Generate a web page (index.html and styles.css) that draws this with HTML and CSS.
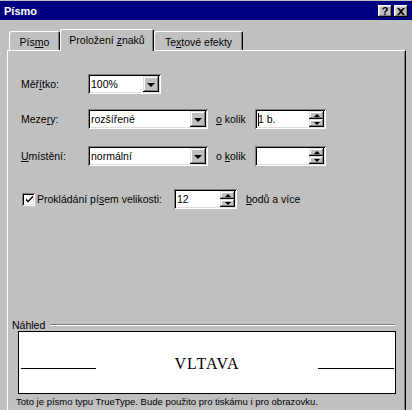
FILE: index.html
```html
<!DOCTYPE html>
<html lang="cs">
<head>
<meta charset="utf-8">
<title>Písmo</title>
<link rel="stylesheet" href="styles.css">
</head>
<body>
<div class="window">
  <div class="titlebar">
    <span class="title">Písmo</span>
    <div class="caption-buttons">
      <span class="cbtn help">?</span>
      <span class="cbtn close"><svg width="8" height="7" viewBox="0 0 8 7"><path d="M0 0h2l2 2 2-2h2L5 3.5 8 7H6L4 5 2 7H0l3-3.5z" fill="#000"/></svg></span>
    </div>
  </div>

  <div class="tabs">
    <div class="tab t1"><span>Pís<u>m</u>o</span></div>
    <div class="tab t2 active"><span>Proložení <u>z</u>naků</span></div>
    <div class="tab t3"><span>Te<u>x</u>tové efekty</span></div>
  </div>

  <div class="panel">
    <div class="row r1">
      <span class="lbl">Měř<u>í</u>tko:</span>
      <div class="field combo w-small"><span class="val">100%</span><span class="drop"><i class="arrow"></i></span></div>
    </div>

    <div class="row r2">
      <span class="lbl">Meze<u>r</u>y:</span>
      <div class="field combo w-wide"><span class="val">rozšířené</span><span class="drop"><i class="arrow"></i></span></div>
      <span class="kolik"><u>o</u> kolik</span>
      <div class="field spin w-spin"><span class="val"><i class="caret"></i>1 b.</span><span class="spinbtns"><b class="sb"><i class="up"></i></b><b class="sb"><i class="down"></i></b></span></div>
    </div>

    <div class="row r3">
      <span class="lbl"><u>U</u>místění:</span>
      <div class="field combo w-wide"><span class="val">normální</span><span class="drop"><i class="arrow"></i></span></div>
      <span class="kolik">o <u>k</u>olik</span>
      <div class="field spin w-spin"><span class="val"></span><span class="spinbtns"><b class="sb"><i class="up"></i></b><b class="sb"><i class="down"></i></b></span></div>
    </div>

    <div class="row r4">
      <span class="checkbox"><svg width="9" height="9" viewBox="0 0 9 9"><path d="M1 3.5l2 2 5-5v2l-5 5-2-2z" fill="#000"/></svg></span>
      <span class="chk-label">Prokládání pí<u>s</u>em velikosti:</span>
      <div class="field spin w-spin2"><span class="val">12</span><span class="spinbtns"><b class="sb"><i class="up"></i></b><b class="sb"><i class="down"></i></b></span></div>
      <span class="after"><u>b</u>odů a více</span>
    </div>

    <div class="group">
      <div class="group-head"><span class="group-title">Náhled</span><span class="etch"></span></div>
      <div class="preview">
        <span class="pline left"></span>
        <span class="sample">VLTAVA</span>
        <span class="pline right"></span>
      </div>
      <div class="caption">Toto je písmo typu TrueType. Bude použito pro tiskámu i pro obrazovku.</div>
    </div>
  </div>
</div>
</body>
</html>
```

FILE: styles.css
```css
* { box-sizing: border-box; }

html, body {
  margin: 0;
  padding: 0;
}

body {
  width: 412px;
  height: 410px;
  overflow: hidden;
  background: #c0c0c0;
  font-family: "Liberation Sans", Arial, sans-serif;
  font-size: 10.5px;
  color: #000;
}

u { text-decoration: underline; text-underline-offset: 1px; }

.window {
  padding-top: 1px;
}

/* title bar */
.titlebar {
  height: 19px;
  background: #000080;
  display: flex;
  align-items: center;
  justify-content: space-between;
  padding: 0 4px 0 4px;
}

.title {
  color: #fff;
  font-weight: bold;
  font-size: 11px;
}

.caption-buttons {
  display: flex;
  gap: 2px;
  margin-top: 1px;
}

.cbtn {
  width: 14px;
  height: 12px;
  background: #c0c0c0;
  box-shadow: inset -1px -1px #000, inset 1px 1px #fff, inset -2px -2px #808080, inset 2px 2px #dfdfdf;
  display: flex;
  align-items: center;
  justify-content: center;
  font-weight: bold;
  font-size: 11px;
  line-height: 12px;
}

/* tabs */
.tabs {
  display: flex;
  align-items: flex-end;
  height: 21px;
  margin: 9px 0 0 9px;
  position: relative;
  z-index: 1;
}

.tab {
  height: 19px;
  display: flex;
  align-items: center;
  justify-content: center;
  background: #c0c0c0;
  border-radius: 2px 2px 0 0;
  box-shadow: inset 1px 1px #fff, inset -1px 0 #000, inset -2px 0 #808080;
  padding-top: 2px;
  white-space: nowrap;
}

.t1 { width: 51px; }
.t2 { width: 94px; }
.t3 { width: 89px; }

.tab.active {
  height: 22px;
  margin-bottom: -1px;
  padding-top: 0;
}

/* panel */
.panel {
  margin-left: 7px;
  width: 399px;
  height: 380px;
  border-top: 1px solid #fff;
  border-left: 1px solid #fff;
  border-right: 1px solid #000;
  box-shadow: inset -1px 0 #808080;
}

.row {
  display: flex;
  align-items: center;
  height: 20px;
  padding-left: 13px;
}

.r1 { margin-top: 23px; }
.r2 { margin-top: 15px; }
.r3 { margin-top: 17px; }
.r4 { margin-top: 23px; padding-left: 14px; }

.lbl { width: 67px; }

/* sunken fields */
.field {
  height: 20px;
  background: #fff;
  box-shadow: inset 1px 1px #808080, inset -1px -1px #fff, inset 2px 2px #000, inset -2px -2px #dfdfdf;
  display: flex;
  align-items: stretch;
  padding: 2px;
}

.field .val {
  flex: 1;
  display: flex;
  align-items: center;
  padding-left: 1px;
  white-space: nowrap;
}

.w-small { width: 73px; }
.w-wide { width: 120px; }
.w-spin { width: 71px; }
.w-spin2 { width: 63px; }

.drop {
  width: 16px;
  background: #c0c0c0;
  box-shadow: inset -1px -1px #000, inset 1px 1px #dfdfdf, inset -2px -2px #808080, inset 2px 2px #fff;
  display: flex;
  align-items: center;
  justify-content: center;
}

.arrow {
  width: 0;
  height: 0;
  border-left: 4px solid transparent;
  border-right: 4px solid transparent;
  border-top: 4px solid #000;
  margin-top: 1px;
}

.kolik {
  margin-left: 8px;
  width: 39px;
}

.spinbtns {
  width: 15px;
  display: flex;
  flex-direction: column;
}

.sb {
  flex: 1;
  background: #c0c0c0;
  box-shadow: inset -1px -1px #000, inset 1px 1px #dfdfdf, inset -2px -2px #808080, inset 2px 2px #fff;
  display: flex;
  align-items: center;
  justify-content: center;
}

.up {
  width: 0;
  height: 0;
  border-left: 3px solid transparent;
  border-right: 3px solid transparent;
  border-bottom: 3px solid #000;
}

.down {
  width: 0;
  height: 0;
  border-left: 3px solid transparent;
  border-right: 3px solid transparent;
  border-top: 3px solid #000;
}

.caret {
  display: inline-block;
  width: 1px;
  height: 13px;
  background: #000;
  margin-right: -1px;
}

/* checkbox */
.checkbox {
  width: 13px;
  height: 13px;
  background: #fff;
  box-shadow: inset 1px 1px #808080, inset -1px -1px #fff, inset 2px 2px #000, inset -2px -2px #dfdfdf;
  display: flex;
  align-items: center;
  justify-content: center;
  padding: 1px 0 0 1px;
}

.chk-label {
  margin-left: 2px;
  width: 137px;
}

.after { margin-left: 9px; }

/* preview group */
.group {
  margin-top: 109px;
}

.group-head {
  display: flex;
  align-items: center;
  height: 13px;
  padding-left: 4px;
}

.group-title { margin-right: 5px; }

.etch {
  width: 345px;
  height: 2px;
  border-top: 1px solid #808080;
  border-bottom: 1px solid #fff;
}

.preview {
  margin-left: 10px;
  width: 378px;
  height: 63px;
  background: #fff;
  border: 1px solid #000;
  display: flex;
  align-items: flex-start;
  padding: 22px 1px 0 2px;
}

.pline {
  height: 15px;
  border-bottom: 1px solid #000;
}

.pline.left { width: 75px; }
.pline.right { width: 76px; }

.sample {
  flex: 1;
  text-align: center;
  font-family: "Liberation Serif", "Times New Roman", serif;
  font-size: 16px;
  letter-spacing: 1px;
  line-height: 19px;
}

.caption {
  margin: 2px 0 0 8px;
  font-size: 9.5px;
  line-height: 12px;
}
```
